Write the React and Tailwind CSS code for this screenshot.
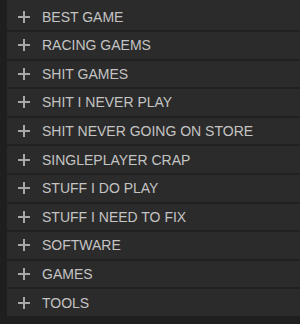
const categories = [
  'BEST GAME',
  'RACING GAEMS',
  'SHIT GAMES',
  'SHIT I NEVER PLAY',
  'SHIT NEVER GOING ON STORE',
  'SINGLEPLAYER CRAP',
  'STUFF I DO PLAY',
  'STUFF I NEED TO FIX',
  'SOFTWARE',
  'GAMES',
  'TOOLS',
];

const PlusIcon = () => (
  <svg width="12" height="12" viewBox="0 0 12 12" className="shrink-0">
    <rect x="5" y="0" width="2" height="12" fill="#a8a8a8" />
    <rect x="0" y="5" width="12" height="2" fill="#a8a8a8" />
  </svg>
);

const App = () => {
  return (
    <div className="h-[324px] w-[300px] overflow-hidden bg-[#1f1f1f] pl-[7px] font-['Liberation_Sans',Arial,sans-serif]">
      <div className="flex flex-col gap-[2px] bg-[#212121]">
        {categories.map((name) => (
          <div
            key={name}
            className="flex h-[26.6px] items-center gap-[12px] bg-[#2b2b2b] pl-[11px] text-[14px] text-[#c4c4c4] first:h-[30px] first:pt-[3px]"
          >
            <PlusIcon />
            <span className="leading-none">{name}</span>
          </div>
        ))}
      </div>
    </div>
  );
};

export default App;
